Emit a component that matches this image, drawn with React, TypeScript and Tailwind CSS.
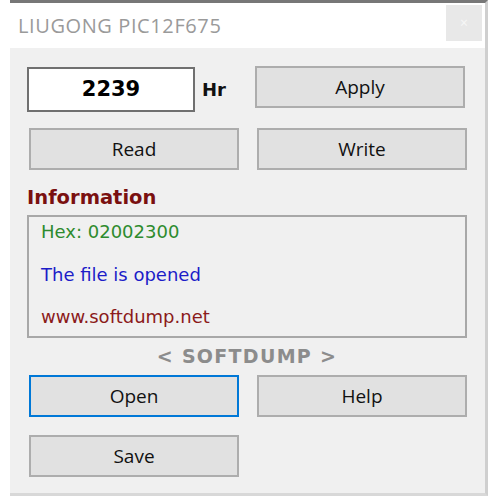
import React from 'react';

const Btn = ({ label, focused }: { label: string; focused?: boolean }) => (
  <button
    className={
      focused
        ? 'h-[42px] w-[210px] bg-[#e1e1e1] border-2 border-[#0078d7] text-[19px] text-[#111] font-["Open_Sans",sans-serif]'
        : 'h-[42px] w-[210px] bg-[#e1e1e1] border-2 border-[#adadad] text-[19px] text-[#111] font-["Open_Sans",sans-serif]'
    }
  >
    {label}
  </button>
);

export default function App() {
  return (
    <div className="w-[500px] h-[500px] bg-white relative overflow-hidden">
      <div className="ml-[10px] w-[478px] h-[496px] flex flex-col border-t-[3px] border-[#777] border-r-[3px] border-r-[#cfcfcf] border-b-[3px] border-b-[#d8d8d8] bg-[#f0f0f0]">
        <div className="h-[45px] bg-white flex items-center justify-between pl-[8px] pr-[3px]">
          <span className='text-[20px] text-[#9a9a9a] font-["Open_Sans",sans-serif] tracking-[0.6px]'>LIUGONG PIC12F675</span>
          <div className="w-[36px] h-[36px] bg-[#e8e8e8] flex items-center justify-center text-[14px] text-[#f6f6f6] mb-[6px]">×</div>
        </div>
        <div className="flex flex-col pl-[17px] pt-[16px]">
          <div className="flex items-start">
            <div className="w-[168px] h-[45px] bg-white border-2 border-[#707070] flex items-center justify-center mt-[3px]">
              <span className='text-[21px] font-bold text-black font-["DejaVu_Sans",sans-serif]'>2239</span>
            </div>
            <span className='ml-[7px] mt-[12px] text-[18px] font-bold text-[#111] font-["DejaVu_Sans",sans-serif]'>Hr</span>
            <div className="ml-[29px] mt-[2px]">
              <Btn label="Apply" />
            </div>
          </div>
          <div className="flex gap-[18px] mt-[16px] pl-[2px]">
            <Btn label="Read" />
            <Btn label="Write" />
          </div>
          <div className='mt-[16px] text-[19.5px] font-bold text-[#7a1010] font-["DejaVu_Sans",sans-serif] leading-[24px]'>Information</div>
          <div className='mt-[5px] w-[440px] h-[123px] border-2 border-[#a8a8a8] pl-[12px] flex flex-col justify-between pt-[1px] pb-[6px] text-[18px] font-["DejaVu_Sans",sans-serif]'>
            <span className="text-[#2e8b2e]">Hex: 02002300</span>
            <span className="text-[#1c1cc8]">The file is opened</span>
            <span className="text-[#8b1a1a]">www.softdump.net</span>
          </div>
          <div className='w-[440px] text-center mt-[6px] text-[19px] font-bold text-[#8c8c8c] font-["DejaVu_Sans",sans-serif] leading-[24px] tracking-[1.3px]'>&lt; SOFTDUMP &gt;</div>
          <div className="flex gap-[18px] mt-[7px] pl-[2px]">
            <Btn label="Open" focused />
            <Btn label="Help" />
          </div>
          <div className="flex mt-[18px] pl-[2px]">
            <Btn label="Save" />
          </div>
        </div>
      </div>
    </div>
  );
}
